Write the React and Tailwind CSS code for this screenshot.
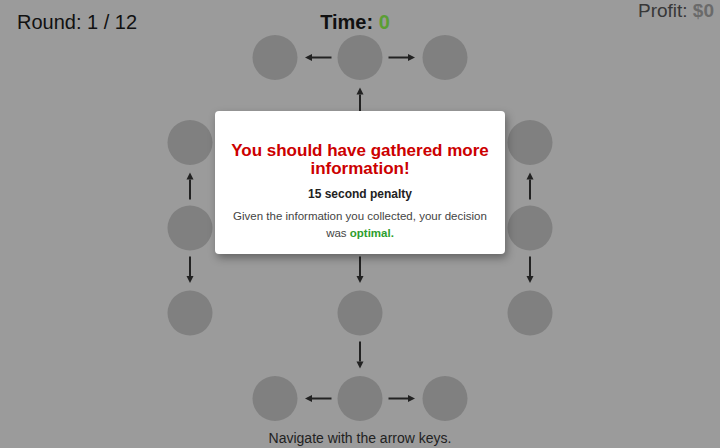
import React from 'react';

const R = 22.5;
const COLS = { a: 190, b: 275, c: 360, d: 445, e: 530 };
const ROWS = [57.5, 142.5, 228, 313, 398.5];

const nodes = [
  [COLS.b, ROWS[0]], [COLS.c, ROWS[0]], [COLS.d, ROWS[0]],
  [COLS.a, ROWS[1]], [COLS.c, ROWS[1]], [COLS.e, ROWS[1]],
  [COLS.a, ROWS[2]], [COLS.b, ROWS[2]], [COLS.c, ROWS[2]], [COLS.d, ROWS[2]], [COLS.e, ROWS[2]],
  [COLS.a, ROWS[3]], [COLS.c, ROWS[3]], [COLS.e, ROWS[3]],
  [COLS.b, ROWS[4]], [COLS.c, ROWS[4]], [COLS.d, ROWS[4]],
];

const edges = [
  [[COLS.c, ROWS[2]], [COLS.c, ROWS[1]]],
  [[COLS.c, ROWS[1]], [COLS.c, ROWS[0]]],
  [[COLS.c, ROWS[0]], [COLS.b, ROWS[0]]],
  [[COLS.c, ROWS[0]], [COLS.d, ROWS[0]]],
  [[COLS.c, ROWS[2]], [COLS.b, ROWS[2]]],
  [[COLS.b, ROWS[2]], [COLS.a, ROWS[2]]],
  [[COLS.c, ROWS[2]], [COLS.d, ROWS[2]]],
  [[COLS.d, ROWS[2]], [COLS.e, ROWS[2]]],
  [[COLS.a, ROWS[2]], [COLS.a, ROWS[1]]],
  [[COLS.a, ROWS[2]], [COLS.a, ROWS[3]]],
  [[COLS.e, ROWS[2]], [COLS.e, ROWS[1]]],
  [[COLS.e, ROWS[2]], [COLS.e, ROWS[3]]],
  [[COLS.c, ROWS[2]], [COLS.c, ROWS[3]]],
  [[COLS.c, ROWS[3]], [COLS.c, ROWS[4]]],
  [[COLS.c, ROWS[4]], [COLS.b, ROWS[4]]],
  [[COLS.c, ROWS[4]], [COLS.d, ROWS[4]]],
];

const Arrow = ({ from, to }) => {
  const dx = Math.sign(to[0] - from[0]);
  const dy = Math.sign(to[1] - from[1]);
  const x1 = from[0] + dx * (R + 6);
  const y1 = from[1] + dy * (R + 6);
  const x2 = to[0] - dx * (R + 7.5);
  const y2 = to[1] - dy * (R + 7.5);
  const hx = x2 - dx * 7;
  const hy = y2 - dy * 7;
  const px = -dy * 3.5;
  const py = dx * 3.5;
  return (
    <g>
      <line x1={x1} y1={y1} x2={hx} y2={hy} stroke="#222" strokeWidth="2" />
      <polygon points={`${x2},${y2} ${hx + px},${hy + py} ${hx - px},${hy - py}`} fill="#222" />
    </g>
  );
};

const App = () => {
  return (
    <div
      className="relative w-[720px] h-[448px] overflow-hidden bg-[#9b9b9b] flex flex-col"
      style={{ fontFamily: '"Liberation Sans", Arial, sans-serif' }}
    >
      <svg className="absolute inset-0" width="720" height="448" viewBox="0 0 720 448">
        {nodes.map(([x, y], i) => (
          <circle key={i} cx={x} cy={y} r={R} fill="#808080" />
        ))}
        {edges.map(([f, t], i) => (
          <Arrow key={i} from={f} to={t} />
        ))}
      </svg>

      <div className="relative grid grid-cols-[1fr_auto_1fr] items-start">
        <div className="pl-[17px] pt-[10px] text-[20px] leading-6 text-[#111]">Round: 1 / 12</div>
        <div className="pt-[10px] pr-[10px] text-[20px] leading-6 font-bold text-[#111]">
          Time: <span className="text-[#5a9e34]">0</span>
        </div>
        <div className="pr-[6px] pt-0 text-right text-[19px] leading-[22px] text-[#383838]">
          Profit: <span className="font-bold text-[#6a6a6a]">$0</span>
        </div>
      </div>

      <div className="flex-1" />

      <div className="relative text-center text-[14px] leading-5 text-[#222]">
        Navigate with the arrow keys.
      </div>

      <div className="absolute left-[215px] top-[111px] w-[290px] h-[143px] bg-white rounded-[4px] shadow-[2px_4px_8px_rgba(0,0,0,0.35)] px-[8px] pt-[31px] text-center">
        <h2 className="px-[6px] text-[17px] leading-[18px] font-bold text-[#cc0000]">
          You should have gathered more information!
        </h2>
        <p className="mt-[8px] text-[12px] leading-4 font-bold text-[#222]">15 second penalty</p>
        <p className="mt-[6px] text-[11.5px] leading-[17px] text-[#444]">
          Given the information you collected, your decision was{' '}
          <span className="font-bold text-[#2e9e2e]">optimal.</span>
        </p>
      </div>
    </div>
  );
};

export default App;
